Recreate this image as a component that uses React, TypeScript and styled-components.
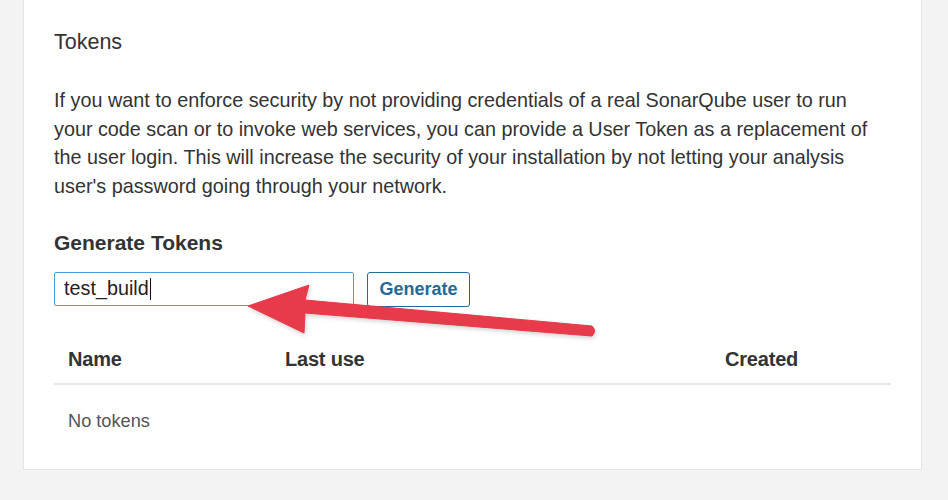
import React from "react";
import styled, { createGlobalStyle } from "styled-components";

const Global = createGlobalStyle`
  html, body { margin: 0; padding: 0; background: #f3f3f3; }
  body { font-family: "Liberation Sans", Arial, Helvetica, sans-serif; color: #333; }
`;

const Page = styled.div`
  position: relative;
  width: 948px;
  height: 500px;
  overflow: hidden;
  background: #f3f3f3;
`;

const Card = styled.section`
  box-sizing: border-box;
  margin-left: 23px;
  width: 899px;
  background: #fff;
  border: 1px solid #e4e4e4;
  border-top: none;
  padding: 28px 30px 36px 30px;
`;

const Title = styled.h2`
  margin: 0 0 30px 0;
  font-size: 21.5px;
  line-height: 28px;
  font-weight: 400;
  color: #333;
`;

const Paragraph = styled.p`
  margin: 0 0 29px 0;
  font-size: 19.8px;
  line-height: 28.7px;
  color: #333;
  max-width: 820px;
`;

const SubTitle = styled.h3`
  margin: 0 0 16px 0;
  font-size: 21px;
  line-height: 26px;
  font-weight: 700;
  color: #333;
`;

const FormRow = styled.div`
  display: flex;
  align-items: flex-start;
  gap: 13px;
`;

const Field = styled.div`
  box-sizing: border-box;
  width: 300px;
  height: 34px;
  border: 1px solid #4b9fd5;
  border-radius: 2px;
  display: flex;
  align-items: center;
  padding: 0 9px;
  font-size: 19.8px;
  color: #222;
`;

const Caret = styled.span`
  display: inline-block;
  width: 1px;
  height: 22px;
  background: #111;
  margin-left: 1px;
`;

const Button = styled.button`
  box-sizing: border-box;
  width: 103px;
  height: 35px;
  border: 1px solid #236a97;
  border-radius: 3px;
  background: #fff;
  color: #236a97;
  font-family: inherit;
  font-size: 18px;
  font-weight: 700;
  padding: 0;
  cursor: pointer;
`;

const Table = styled.div`
  margin-top: 20px;
`;

const Row = styled.div<{ $head?: boolean }>`
  display: grid;
  grid-template-columns: 217px 440px 1fr;
  padding: ${(p) => (p.$head ? "19px 0 11px 0" : "24px 0 0 0")};
  border-bottom: ${(p) => (p.$head ? "2px solid #e6e6e6" : "none")};
`;

const Cell = styled.div<{ $head?: boolean }>`
  padding-left: 14px;
  font-size: ${(p) => (p.$head ? "20px" : "18.2px")};
  line-height: ${(p) => (p.$head ? "26px" : "24px")};
  font-weight: ${(p) => (p.$head ? 700 : 400)};
  color: ${(p) => (p.$head ? "#333" : "#555")};
  letter-spacing: ${(p) => (p.$head ? "-0.2px" : "0")};
`;

const ArrowSvg = styled.svg`
  position: absolute;
  left: 0;
  top: 0;
  pointer-events: none;
  filter: drop-shadow(1px 2px 2px rgba(0, 0, 0, 0.18));
`;

export default function App() {
  return (
    <Page>
      <Global />
      <Card>
        <Title>Tokens</Title>
        <Paragraph>
          If you want to enforce security by not providing credentials of a real SonarQube user to run
          your code scan or to invoke web services, you can provide a User Token as a replacement of
          the user login. This will increase the security of your installation by not letting your analysis
          user's password going through your network.
        </Paragraph>
        <SubTitle>Generate Tokens</SubTitle>
        <FormRow>
          <Field role="textbox">
            test_build
            <Caret />
          </Field>
          <Button>Generate</Button>
        </FormRow>
        <Table>
          <Row $head>
            <Cell $head>Name</Cell>
            <Cell $head>Last use</Cell>
            <Cell $head>Created</Cell>
          </Row>
          <Row>
            <Cell>No tokens</Cell>
          </Row>
        </Table>
      </Card>
      <ArrowSvg width="948" height="500" viewBox="0 0 948 500">
        <path
          d="M248 306 L309 285 L305 300 L592 326 Q597 331 592 336 L305 313 L304 333 Z"
          fill="#e73a4a"
          stroke="#e73a4a"
          strokeWidth="1"
          strokeLinejoin="round"
        />
      </ArrowSvg>
    </Page>
  );
}
